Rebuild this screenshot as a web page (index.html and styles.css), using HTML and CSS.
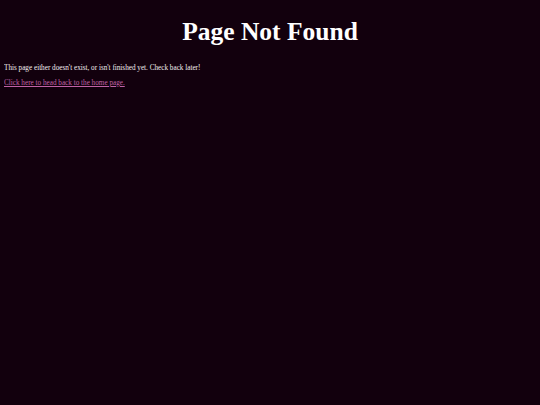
FILE: index.html
```html
<!DOCTYPE html>
<html>
<head>
<meta charset="utf-8">
<link rel="stylesheet" href="styles.css">
</head>
<body>
<h1 class="title">Page Not Found</h1>
<p class="text">This page either doesn't exist, or isn't finished yet. Check back later!</p>
<p class="text"><a class="link" href="#">Click here to head back to the home page.</a></p>
</body>
</html>
```
FILE: styles.css
```css
html, body {
  background: #12000d;
}
body {
  margin: 4px;
  color: #f2eef0;
  font-family: "Liberation Serif", "Times New Roman", serif;
}
.title {
  text-align: center;
  font-size: 25.5px;
  font-weight: bold;
  margin: 13px 0 18px;
  line-height: 1.15;
  color: #ffffff;
}
.text {
  font-size: 7.2px;
  margin: 0 0 6px;
  line-height: 1.15;
}
.link {
  color: #c062a6;
}
```
